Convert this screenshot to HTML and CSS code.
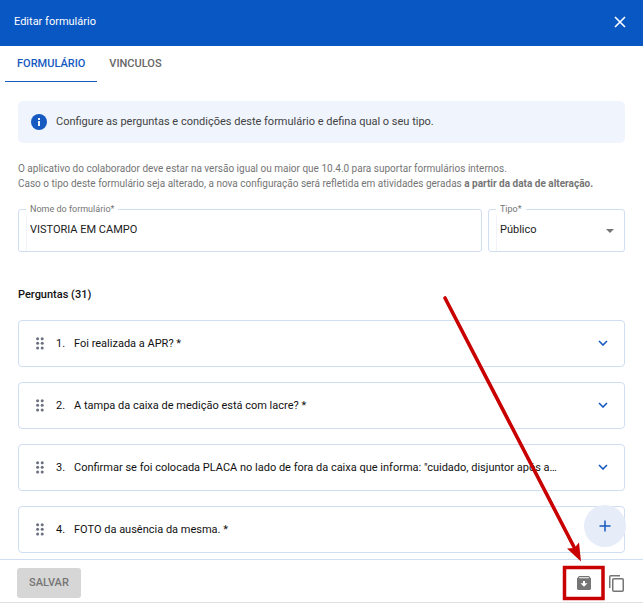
FILE: index.html
```html
<!DOCTYPE html>
<html lang="pt-BR">
<head>
    <meta charset="UTF-8">
    <meta name="viewport" content="width=device-width, initial-scale=1.0">
    <title>Editar formulário</title>
    <link rel="stylesheet" href="styles.css">
</head>
<body>
    <header class="header">
        <h1>Editar formulário</h1>
        <button class="icon-btn" type="button" aria-label="Fechar">
            <svg width="12" height="12" viewBox="0 0 12 12"><path d="M1 1l10 10M11 1L1 11" stroke="#fff" stroke-width="1.6"/></svg>
        </button>
    </header>
    <nav class="tabs">
        <a class="tab active" href="#formulario">FORMULÁRIO</a>
        <a class="tab" href="#vinculos">VINCULOS</a>
    </nav>
    <main class="content" id="formulario">
        <div class="info">
            <svg width="16" height="16" viewBox="0 0 16 16"><circle cx="8" cy="8" r="8" fill="#1659c0"/><path d="M7 7h2v5H7zM7 4h2v2H7z" fill="#f0f5fd"/></svg>
            <span>Configure as perguntas e condições deste formulário e defina qual o seu tipo.</span>
        </div>
        <p class="note">
            O aplicativo do colaborador deve estar na versão igual ou maior que 10.4.0 para suportar formulários internos.<br>
            Caso o tipo deste formulário seja alterado, a nova configuração será refletida em atividades geradas <b>a partir da data de alteração.</b>
        </p>
        <form class="fields">
            <fieldset class="field field-name">
                <legend><label for="nome">Nome do formulário*</label></legend>
                <input id="nome" type="text" value="VISTORIA EM CAMPO">
            </fieldset>
            <fieldset class="field field-type">
                <legend><label for="tipo">Tipo*</label></legend>
                <select id="tipo">
                    <option>Público</option>
                    <option>Interno</option>
                </select>
                <svg class="caret" width="8" height="4" viewBox="0 0 8 4"><path d="M0 0h8L4 4z" fill="#757575"/></svg>
            </fieldset>
        </form>
        <h2>Perguntas (31)</h2>
        <ol class="questions">
            <li class="question">
                <svg class="drag" width="8" height="13" viewBox="0 0 8 13"><use href="#dots"/></svg>
                <span class="num">1.</span>
                <span class="text">Foi realizada a APR? *</span>
                <button class="icon-btn" type="button" aria-label="Expandir pergunta 1"><svg width="10" height="6" viewBox="0 0 10 6"><use href="#chevron"/></svg></button>
            </li>
            <li class="question">
                <svg class="drag" width="8" height="13" viewBox="0 0 8 13"><use href="#dots"/></svg>
                <span class="num">2.</span>
                <span class="text">A tampa da caixa de medição está com lacre? *</span>
                <button class="icon-btn" type="button" aria-label="Expandir pergunta 2"><svg width="10" height="6" viewBox="0 0 10 6"><use href="#chevron"/></svg></button>
            </li>
            <li class="question">
                <svg class="drag" width="8" height="13" viewBox="0 0 8 13"><use href="#dots"/></svg>
                <span class="num">3.</span>
                <span class="text">Confirmar se foi colocada PLACA no lado de fora da caixa que informa: "cuidado, disjuntor após a…</span>
                <button class="icon-btn" type="button" aria-label="Expandir pergunta 3"><svg width="10" height="6" viewBox="0 0 10 6"><use href="#chevron"/></svg></button>
            </li>
            <li class="question">
                <svg class="drag" width="8" height="13" viewBox="0 0 8 13"><use href="#dots"/></svg>
                <span class="num">4.</span>
                <span class="text">FOTO da ausência da mesma. *</span>
            </li>
        </ol>
        <button class="add" type="button" aria-label="Adicionar pergunta">
            <svg width="12" height="12" viewBox="0 0 12 12"><path d="M6 0.5v11M0.5 6h11" stroke="#1659c0" stroke-width="1.5"/></svg>
        </button>
    </main>
    <footer class="footer">
        <button class="save" type="button" disabled>SALVAR</button>
        <button class="icon-btn" type="button" aria-label="Arquivar">
            <svg width="14" height="14" viewBox="0 0 14 14"><path fill="#757575" fill-rule="evenodd" d="M2 0h10l2 2.400V12.600a1.400 1.400 0 0 1-1.400 1.400H1.400A1.400 1.400 0 0 1 0 12.600V2.400zM1.800 2.300h10.400l-.7-1H2.500zM6 5v2.300H3.500L7 10.800l3.500-3.500H8V5z"/></svg>
        </button>
        <button class="icon-btn" type="button" aria-label="Duplicar">
            <svg width="15" height="17" viewBox="0 0 15 17" fill="none" stroke="#757575" stroke-width="1.500"><rect x="3.750" y="3.750" width="10.500" height="12.500" rx="1"/><path d="M.75 13V1.750a1 1 0 0 1 1-1H11"/></svg>
        </button>
        <!-- arrow and box over the archive button -->
        <svg class="marker" width="168" height="308" viewBox="0 0 168 308">
            <path d="M7 5l129 249" stroke="#c80000" stroke-width="3.600" stroke-linecap="round"/>
            <path d="M143 268.500l-14-13 7.500-.5 4.500-5.500z" fill="#c80000"/>
            <rect x="126.500" y="274.500" width="38.500" height="31" fill="none" stroke="#c80000" stroke-width="3.500"/>
        </svg>
    </footer>

    <svg width="0" height="0" class="symbols">
        <symbol id="dots" viewBox="0 0 8 13">
            <g fill="#6b7080"><circle cx="1.600" cy="1.700" r="1.500"/><circle cx="6.200" cy="1.700" r="1.500"/><circle cx="1.600" cy="6.300" r="1.500"/><circle cx="6.200" cy="6.300" r="1.500"/><circle cx="1.600" cy="10.900" r="1.500"/><circle cx="6.200" cy="10.900" r="1.500"/></g>
        </symbol>
        <symbol id="chevron" viewBox="0 0 10 6">
            <path d="M1 1l4 4 4-4" fill="none" stroke="#1659c0" stroke-width="1.600"/>
        </symbol>
    </svg>
</body>
</html>
```
FILE: styles.css
```css
* {
    box-sizing: border-box;
}

body {
    display: flex;
    flex-direction: column;
    min-height: 100vh;
    margin: 0;
    font-family: Roboto, Arial, sans-serif;
    font-size: 11px;
    line-height: 16px;
    color: #212121;
    background: #fff;
}

button, input, select {
    font: inherit;
    color: inherit;
}

svg {
    display: block;
    flex-shrink: 0;
}

h1, h2 {
    margin: 0;
    font-size: 11px;
}

.header {
    display: flex;
    justify-content: space-between;
    align-items: center;
    padding: 14px 13px 16px 14px;
    color: #fff;
    background: #0957c3;
}

h1 {
    font-weight: 400;
}

.icon-btn {
    display: flex;
    align-items: center;
    justify-content: center;
    width: 20px;
    height: 16px;
    padding: 0;
    border: 0;
    background: none;
}

.tabs {
    display: flex;
    padding-left: 5px;
}

.tab {
    padding: 10px 12px 9px;
    border-bottom: 1px solid transparent;
    color: #666;
    font-weight: 500;
    text-decoration: none;
}

.tab.active {
    color: #1659c0;
    border-color: #1659c0;
}

.content {
    position: relative;
    flex: 1;
    padding: 19px 18px 6px;
}

.info {
    display: flex;
    align-items: center;
    gap: 9px;
    padding: 13px;
    border-radius: 5px;
    color: #424242;
    background: #f0f5fd;
}

.note {
    margin: 18px 0 12px;
    color: #757575;
    font-size: 10px;
    line-height: 15px;
}

.fields {
    display: flex;
    gap: 6px;
}

.field {
    position: relative;
    min-width: 0;
    margin: 0;
    padding: 0 7px;
    border: 1px solid #d0def2;
    border-radius: 3px;
}

.field-name {
    flex: 1;
}

.field-type {
    width: 137px;
}

.field legend {
    padding: 0 4px;
    color: #757575;
    font-size: 9px;
    line-height: 12px;
}

.field input,
.field select {
    display: block;
    width: 100%;
    height: 36px;
    padding: 0 3px 8px;
    border: 0;
    border-left: 1px solid #f0f3f8;
    outline: 0;
    background: none;
    appearance: none;
}

.field select {
    padding-bottom: 6px;
}

.caret {
    position: absolute;
    right: 10px;
    top: 14px;
    pointer-events: none;
}

h2 {
    margin: 35px 0 17px;
    color: #111;
    font-weight: 500;
}

.questions {
    display: flex;
    flex-direction: column;
    gap: 15px;
    margin: 0;
    padding: 0;
    list-style: none;
}

.question {
    display: flex;
    align-items: center;
    height: 47px;
    padding: 0 11px 0 17px;
    border: 1px solid #d0def2;
    border-radius: 4px;
    color: #111;
}

.question .icon-btn {
    padding-bottom: 2px;
}

.num {
    width: 18px;
    margin-left: 12px;
}

.text {
    flex: 1;
    min-width: 0;
    overflow: hidden;
    white-space: nowrap;
    text-overflow: ellipsis;
}

.add {
    position: absolute;
    right: 17px;
    bottom: 12px;
    display: flex;
    align-items: center;
    justify-content: center;
    width: 42px;
    height: 42px;
    padding: 0;
    border: 0;
    border-radius: 50%;
    background: #e6ecf8;
}

.footer {
    position: relative;
    display: flex;
    align-items: center;
    gap: 12px;
    padding: 8px 17px 4px;
    border-top: 1px solid #d0def2;
    border-bottom: 1px solid #e0e0e0;
}

.save {
    height: 30px;
    margin-right: auto;
    padding: 0 12px;
    border: 0;
    border-radius: 3px;
    color: #757575;
    background: #d6d6d6;
    font-weight: 500;
}

.marker {
    position: absolute;
    right: 37px;
    bottom: 1px;
    pointer-events: none;
}

.symbols {
    position: absolute;
}
```
